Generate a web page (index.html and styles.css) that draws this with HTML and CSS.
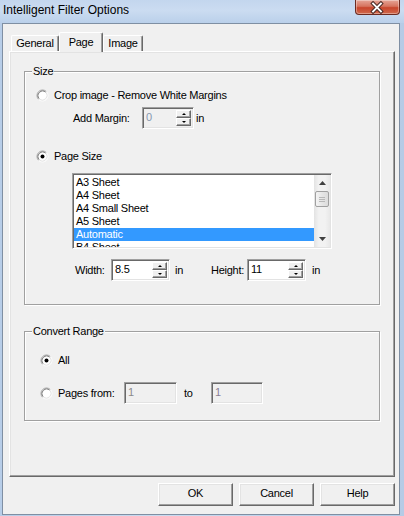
FILE: index.html
```html
<!DOCTYPE html>
<html>
<head>
<meta charset="utf-8">
<title>Intelligent Filter Options</title>
<link rel="stylesheet" href="styles.css">
</head>
<body>
<div class="window">
  <div class="titlebar">
    <div class="title">Intelligent Filter Options</div>
    <div class="close">
      <svg width="45" height="15" viewBox="0 0 45 15">
        <path d="M18.5 3.5L26.5 11.5M26.5 3.5L18.5 11.5" stroke="#4a2a25" stroke-width="4" stroke-linecap="square"/>
        <path d="M18.5 3.5L26.5 11.5M26.5 3.5L18.5 11.5" stroke="#fff" stroke-width="2" stroke-linecap="square"/>
      </svg>
    </div>
  </div>
  <div class="client">
    <div class="tabs">
      <div class="tab tab-general">General</div>
      <div class="tab tab-page active">Page</div>
      <div class="tab tab-image">Image</div>
    </div>
    <div class="panel">
      <div class="group group-size">
        <span class="legend">Size</span>
        <div class="row row-crop">
          <svg class="radio" width="13" height="13" viewBox="0 0 13 13">
            <circle cx="6.5" cy="6.5" r="5" fill="#fff"/>
            <path d="M2.61 10.39A5.5 5.5 0 0 1 10.39 2.61" fill="none" stroke="#a0a0a0"/>
            <path d="M10.39 2.61A5.5 5.5 0 0 1 2.61 10.39" fill="none" stroke="#fff"/>
            <path d="M3.32 9.68A4.5 4.5 0 0 1 9.68 3.32" fill="none" stroke="#7a7a7a"/>
            <path d="M9.68 3.32A4.5 4.5 0 0 1 3.32 9.68" fill="none" stroke="#e3e3e3"/>
          </svg>
          <span class="radio-label">Crop image - Remove White Margins</span>
        </div>
        <div class="row row-margin">
          <span class="lbl lbl-margin">Add Margin:</span>
          <div class="spin-input disabled w-margin">
            <span class="val val-blue">0</span>
            <div class="spin"><div class="sb"><i class="up"></i></div><div class="sb"><i class="down"></i></div></div>
          </div>
          <span class="unit">in</span>
        </div>
        <div class="row row-pagesize">
          <svg class="radio" width="13" height="13" viewBox="0 0 13 13">
            <circle cx="6.5" cy="6.5" r="5" fill="#fff"/>
            <path d="M2.61 10.39A5.5 5.5 0 0 1 10.39 2.61" fill="none" stroke="#a0a0a0"/>
            <path d="M10.39 2.61A5.5 5.5 0 0 1 2.61 10.39" fill="none" stroke="#fff"/>
            <path d="M3.32 9.68A4.5 4.5 0 0 1 9.68 3.32" fill="none" stroke="#7a7a7a"/>
            <path d="M9.68 3.32A4.5 4.5 0 0 1 3.32 9.68" fill="none" stroke="#e3e3e3"/>
            <circle cx="6.5" cy="6.5" r="2" fill="#000"/>
          </svg>
          <span class="radio-label">Page Size</span>
        </div>
        <div class="listbox">
          <div class="items">
            <div class="item">A3 Sheet</div>
            <div class="item">A4 Sheet</div>
            <div class="item">A4 Small Sheet</div>
            <div class="item">A5 Sheet</div>
            <div class="item sel">Automatic</div>
            <div class="item">B4 Sheet</div>
          </div>
          <div class="scrollbar">
            <div class="sbtn"><svg width="7" height="4" viewBox="0 0 7 4"><path d="M0 4L3.5 0L7 4Z" fill="#404040"/></svg></div>
            <div class="thumb"><span></span><span></span><span></span></div>
            <div class="track"></div>
            <div class="sbtn"><svg width="7" height="4" viewBox="0 0 7 4"><path d="M0 0L3.5 4L7 0Z" fill="#404040"/></svg></div>
          </div>
        </div>
        <div class="row row-size">
          <span class="lbl lbl-width">Width:</span>
          <div class="spin-input w-dim">
            <span class="val">8.5</span>
            <div class="spin"><div class="sb"><i class="up"></i></div><div class="sb"><i class="down"></i></div></div>
          </div>
          <span class="unit unit-w">in</span>
          <span class="lbl lbl-height">Height:</span>
          <div class="spin-input w-dim">
            <span class="val">11</span>
            <div class="spin"><div class="sb"><i class="up"></i></div><div class="sb"><i class="down"></i></div></div>
          </div>
          <span class="unit unit-h">in</span>
        </div>
      </div>
      <div class="group group-range">
        <span class="legend">Convert Range</span>
        <div class="row row-all">
          <svg class="radio" width="13" height="13" viewBox="0 0 13 13">
            <circle cx="6.5" cy="6.5" r="5" fill="#fff"/>
            <path d="M2.61 10.39A5.5 5.5 0 0 1 10.39 2.61" fill="none" stroke="#a0a0a0"/>
            <path d="M10.39 2.61A5.5 5.5 0 0 1 2.61 10.39" fill="none" stroke="#fff"/>
            <path d="M3.32 9.68A4.5 4.5 0 0 1 9.68 3.32" fill="none" stroke="#7a7a7a"/>
            <path d="M9.68 3.32A4.5 4.5 0 0 1 3.32 9.68" fill="none" stroke="#e3e3e3"/>
            <circle cx="6.5" cy="6.5" r="2" fill="#000"/>
          </svg>
          <span class="radio-label">All</span>
        </div>
        <div class="row row-pages">
          <svg class="radio" width="13" height="13" viewBox="0 0 13 13">
            <circle cx="6.5" cy="6.5" r="5" fill="#fff"/>
            <path d="M2.61 10.39A5.5 5.5 0 0 1 10.39 2.61" fill="none" stroke="#a0a0a0"/>
            <path d="M10.39 2.61A5.5 5.5 0 0 1 2.61 10.39" fill="none" stroke="#fff"/>
            <path d="M3.32 9.68A4.5 4.5 0 0 1 9.68 3.32" fill="none" stroke="#7a7a7a"/>
            <path d="M9.68 3.32A4.5 4.5 0 0 1 3.32 9.68" fill="none" stroke="#e3e3e3"/>
          </svg>
          <span class="radio-label lbl-pages">Pages from:</span>
          <div class="spin-input disabled w-from"><span class="val val-gray">1</span></div>
          <span class="lbl lbl-to">to</span>
          <div class="spin-input disabled w-to"><span class="val val-gray2">1</span></div>
        </div>
      </div>
    </div>
    <div class="buttons">
      <div class="btn">OK</div>
      <div class="btn">Cancel</div>
      <div class="btn">Help</div>
    </div>
  </div>
</div>
</body>
</html>
```
FILE: styles.css
```css
* { box-sizing: border-box; }
html, body { margin: 0; padding: 0; }
body {
  width: 404px;
  height: 516px;
  overflow: hidden;
  font-family: "Liberation Sans", Arial, sans-serif;
  font-size: 11px;
  letter-spacing: -0.25px;
  color: #000;
  background: linear-gradient(90deg, #b7cde8 0%, #c9dbf0 40%, #bfd3ec 70%, #b5cbe6 100%);
}
.window {
  display: flex;
  flex-direction: column;
  height: 516px;
}
.titlebar {
  height: 23px;
  flex: none;
  display: flex;
  align-items: flex-start;
  background: linear-gradient(180deg, #c3d6ee 0%, #cbdcf1 45%, #bad0ea 100%);
}
.title {
  font-size: 12px;
  letter-spacing: 0;
  line-height: 14px;
  padding: 3px 0 0 3px;
  color: #000;
}
.close {
  margin-left: auto;
  margin-right: 4px;
  width: 45px;
  height: 15px;
  border: 1px solid #6b2a20;
  border-top: none;
  border-radius: 0 0 4px 4px;
  background: linear-gradient(180deg, #e6a597 0%, #d6745f 45%, #c8452c 55%, #d06a4d 100%);
  box-shadow: inset 0 0 0 1px rgba(255,255,255,0.35);
  display: flex;
}
.close svg { display: block; margin-left: -1px; }

.client {
  flex: 1;
  margin: 0 4px 1px 2px;
  border: 1px solid #7f8fa3;
  background: #f0f0f0;
  padding: 8px 0 0 6px;
  display: flex;
  flex-direction: column;
}

/* tabs */
.tabs {
  display: flex;
  align-items: flex-end;
  height: 19px;
  padding-left: 2px;
  flex: none;
}
.tab {
  height: 16px;
  line-height: 15px;
  text-align: center;
  background: #f0f0f0;
  border-top: 1px solid #fff;
  border-left: 1px solid #fff;
  border-right: 1px solid #696969;
  border-radius: 2px 2px 0 0;
  box-shadow: inset -1px 0 0 #a0a0a0;
}
.tab-general { width: 48px; }
.tab-page { width: 44px; }
.tab-image { width: 40px; }
.tab.active {
  height: 20px;
  line-height: 18px;
  margin-bottom: -1px;
  position: relative;
  z-index: 1;
}

.panel {
  width: 386px;
  height: 426px;
  flex: none;
  border-top: 1px solid #fff;
  border-left: 1px solid #fff;
  border-right: 1px solid #696969;
  border-bottom: 1px solid #696969;
  box-shadow: inset -1px -1px 0 #a0a0a0, inset 1px 1px 0 #e3e3e3;
  padding: 19px 0 0 14px;
  display: flex;
  flex-direction: column;
}

.group {
  position: relative;
  width: 356px;
  border: 1px solid #a0a0a0;
  box-shadow: inset 1px 1px 0 #fff, 1px 1px 0 #fff;
  display: flex;
  flex-direction: column;
  flex: none;
}
.group-size { height: 234px; }
.group-range { height: 90px; margin-top: 26px; }
.legend {
  position: absolute;
  top: -7px;
  left: 7px;
  padding: 0 1px;
  line-height: 13px;
  background: #f0f0f0;
}

.row {
  display: flex;
  align-items: center;
  flex: none;
}
.radio { display: block; flex: none; }
.radio-label { margin-left: 5px; line-height: 13px; }

.row-crop { margin-top: 17px; padding-left: 11px; height: 13px; }
.row-margin { margin-top: 5px; padding-left: 48px; height: 22px; }
.row-pagesize { margin-top: 21px; padding-left: 11px; height: 13px; }
.row-size { margin-top: 10px; padding-left: 50px; height: 22px; }
.row-all { margin-top: 22px; padding-left: 15px; height: 13px; }
.row-pages { margin-top: 15px; padding-left: 15px; height: 22px; }

.lbl { line-height: 13px; }
.lbl-margin { width: 69px; }
.lbl-width { width: 36px; }
.lbl-height { width: 36px; }
.lbl-pages { width: 66px; }
.lbl-to { width: 27px; margin-left: 7px; }
.unit { line-height: 13px; margin-left: 2px; }
.unit-w { margin-left: 5px; width: 36px; }
.unit-h { margin-left: 6px; }

.spin-input {
  height: 22px;
  display: flex;
  flex: none;
  background: #fff;
  border-top: 1px solid #a0a0a0;
  border-left: 1px solid #a0a0a0;
  border-right: 1px solid #fff;
  border-bottom: 1px solid #fff;
  box-shadow: inset 1px 1px 0 #696969, inset -1px -1px 0 #e3e3e3;
  padding: 2px 2px 2px 2px;
}
.spin-input.disabled { background: #f0f0f0; }
.w-margin { width: 52px; }
.w-dim { width: 59px; }
.w-from { width: 53px; }
.w-to { width: 52px; }
.val { flex: 1; line-height: 14px; padding-left: 1px; }
.val-blue { color: #8797b0; }
.val-gray { color: #8a8a8a; }
.val-gray2 { color: #8a7f95; }

.spin {
  width: 15px;
  display: flex;
  flex-direction: column;
}
.sb {
  flex: 1;
  background: #f0f0f0;
  border-top: 1px solid #fff;
  border-left: 1px solid #fff;
  border-right: 1px solid #696969;
  border-bottom: 1px solid #696969;
  box-shadow: inset -1px -1px 0 #a0a0a0;
  display: flex;
  align-items: center;
  justify-content: center;
}
.sb i { display: block; width: 0; height: 0; border-left: 2px solid transparent; border-right: 2px solid transparent; }
.sb i.up { border-bottom: 2px solid #000; }
.sb i.down { border-top: 2px solid #000; }

/* listbox */
.listbox {
  margin: 10px 0 0 47px;
  width: 260px;
  height: 76px;
  flex: none;
  display: flex;
  background: #fff;
  border-top: 1px solid #a0a0a0;
  border-left: 1px solid #a0a0a0;
  border-right: 1px solid #fff;
  border-bottom: 1px solid #fff;
  box-shadow: inset 1px 1px 0 #696969, inset -1px -1px 0 #e3e3e3;
  padding: 1px;
}
.items {
  flex: 1;
  overflow: hidden;
  padding-top: 1px;
}
.item {
  height: 13px;
  line-height: 13px;
  padding-left: 2px;
  white-space: nowrap;
}
.item.sel { background: #3399ff; color: #fff; }
.scrollbar {
  width: 16px;
  display: flex;
  flex-direction: column;
  background: linear-gradient(90deg, #e3e3e3, #f2f2f2 30%, #f2f2f2 70%, #e8e8e8);
}
.sbtn {
  height: 16px;
  display: flex;
  align-items: center;
  justify-content: center;
}
.sbtn svg { display: block; }
.thumb {
  height: 16px;
  margin: 0 1px;
  border: 1px solid #a0a0a0;
  border-radius: 2px;
  background: linear-gradient(90deg, #f4f4f4, #e6e6e6 50%, #dcdcdc);
  display: flex;
  flex-direction: column;
  align-items: center;
  justify-content: center;
  gap: 1px;
}
.thumb span { display: block; width: 6px; height: 1px; background: #b8b8b8; }
.track { flex: 1; }

/* buttons */
.buttons {
  display: flex;
  justify-content: flex-end;
  gap: 6px;
  margin-top: 6px;
  width: 386px;
  flex: none;
}
.btn {
  width: 75px;
  height: 23px;
  line-height: 19px;
  text-align: center;
  background: #f0f0f0;
  border-top: 1px solid #fff;
  border-left: 1px solid #fff;
  border-right: 1px solid #696969;
  border-bottom: 1px solid #696969;
  box-shadow: inset -1px -1px 0 #a0a0a0, inset 1px 1px 0 #e3e3e3;
}
```
